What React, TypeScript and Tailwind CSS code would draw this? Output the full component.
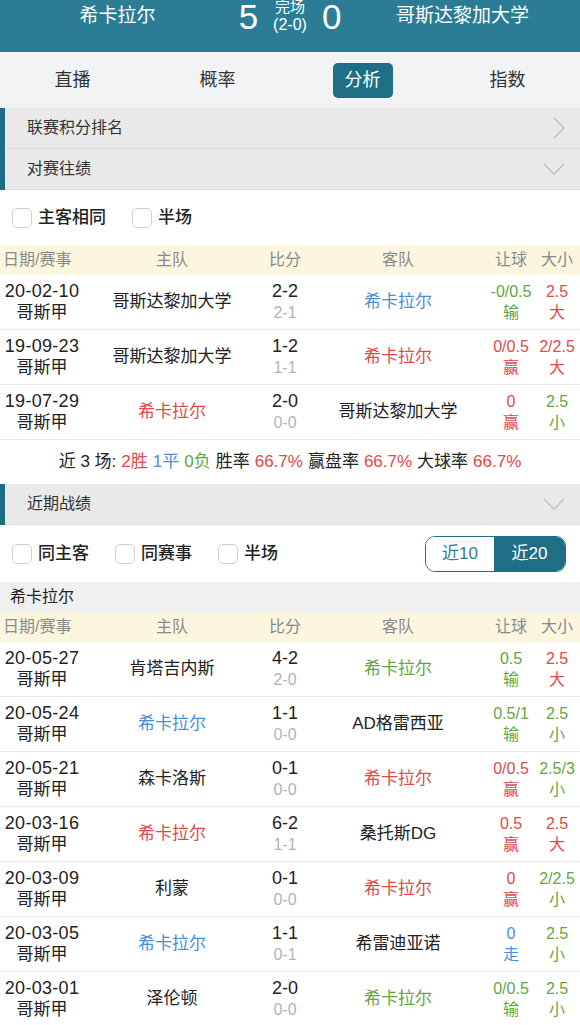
import React from 'react';

type C = 'k' | 'r' | 'b' | 'g';

interface Match {
  date: string;
  home: string;
  homeC: C;
  score: string;
  half: string;
  away: string;
  awayC: C;
  hc: string;
  hcRes: string;
  hcC: C;
  ou: string;
  ouRes: string;
  ouC: C;
}

const color: Record<C, string> = {
  k: 'text-[#222]',
  r: 'text-[#e0494b]',
  b: 'text-[#4a8fd6]',
  g: 'text-[#5fa743]',
};

const h2h: Match[] = [
  { date: '20-02-10', home: '哥斯达黎加大学', homeC: 'k', score: '2-2', half: '2-1', away: '希卡拉尔', awayC: 'b', hc: '-0/0.5', hcRes: '输', hcC: 'g', ou: '2.5', ouRes: '大', ouC: 'r' },
  { date: '19-09-23', home: '哥斯达黎加大学', homeC: 'k', score: '1-2', half: '1-1', away: '希卡拉尔', awayC: 'r', hc: '0/0.5', hcRes: '赢', hcC: 'r', ou: '2/2.5', ouRes: '大', ouC: 'r' },
  { date: '19-07-29', home: '希卡拉尔', homeC: 'r', score: '2-0', half: '0-0', away: '哥斯达黎加大学', awayC: 'k', hc: '0', hcRes: '赢', hcC: 'r', ou: '2.5', ouRes: '小', ouC: 'g' },
];

const recent: Match[] = [
  { date: '20-05-27', home: '肯塔吉内斯', homeC: 'k', score: '4-2', half: '2-0', away: '希卡拉尔', awayC: 'g', hc: '0.5', hcRes: '输', hcC: 'g', ou: '2.5', ouRes: '大', ouC: 'r' },
  { date: '20-05-24', home: '希卡拉尔', homeC: 'b', score: '1-1', half: '0-0', away: 'AD格雷西亚', awayC: 'k', hc: '0.5/1', hcRes: '输', hcC: 'g', ou: '2.5', ouRes: '小', ouC: 'g' },
  { date: '20-05-21', home: '森卡洛斯', homeC: 'k', score: '0-1', half: '0-0', away: '希卡拉尔', awayC: 'r', hc: '0/0.5', hcRes: '赢', hcC: 'r', ou: '2.5/3', ouRes: '小', ouC: 'g' },
  { date: '20-03-16', home: '希卡拉尔', homeC: 'r', score: '6-2', half: '1-1', away: '桑托斯DG', awayC: 'k', hc: '0.5', hcRes: '赢', hcC: 'r', ou: '2.5', ouRes: '大', ouC: 'r' },
  { date: '20-03-09', home: '利蒙', homeC: 'k', score: '0-1', half: '0-0', away: '希卡拉尔', awayC: 'r', hc: '0', hcRes: '赢', hcC: 'r', ou: '2/2.5', ouRes: '小', ouC: 'g' },
  { date: '20-03-05', home: '希卡拉尔', homeC: 'b', score: '1-1', half: '0-1', away: '希雷迪亚诺', awayC: 'k', hc: '0', hcRes: '走', hcC: 'b', ou: '2.5', ouRes: '小', ouC: 'g' },
  { date: '20-03-01', home: '泽伦顿', homeC: 'k', score: '2-0', half: '0-0', away: '希卡拉尔', awayC: 'g', hc: '0/0.5', hcRes: '输', hcC: 'g', ou: '2.5', ouRes: '小', ouC: 'g' },
];

const cols = 'grid grid-cols-[78px_188px_38px_188px_38px_50px]';

function SectionBar({ title, icon }: { title: string; icon: 'right' | 'down' }) {
  return (
    <div className="flex h-[41px] items-center justify-between bg-[#e9e9e9] pl-[22px] pr-[14px] border-b border-[#dcdcdc]">
      <span className="text-[16px] text-[#333]">{title}</span>
      {icon === 'right' ? (
        <svg width="14" height="24" viewBox="0 0 14 24" fill="none" stroke="#c4c4c4" strokeWidth="1.6">
          <path d="M2 2l10 10-10 10" />
        </svg>
      ) : (
        <svg width="24" height="14" viewBox="0 0 24 14" fill="none" stroke="#c4c4c4" strokeWidth="1.6">
          <path d="M2 2l10 10 10-10" />
        </svg>
      )}
    </div>
  );
}

function Check({ label }: { label: string }) {
  return (
    <div className="flex items-center gap-[6px]">
      <span className="h-[20px] w-[20px] rounded-[5px] border border-[#cfcfcf] bg-white" />
      <span className="text-[17px] font-medium text-[#222]">{label}</span>
    </div>
  );
}

function TableHead() {
  return (
    <div className={`${cols} h-[30px] items-center bg-[#fcf6df] text-[16px] text-[#8a8a8a]`}>
      <span className="pl-[3px] whitespace-nowrap">日期/赛事</span>
      <span className="text-center">主队</span>
      <span className="text-center">比分</span>
      <span className="text-center">客队</span>
      <span className="text-center whitespace-nowrap">让球</span>
      <span className="text-center pl-[4px]">大小</span>
    </div>
  );
}

function Row({ m }: { m: Match }) {
  return (
    <div className={`${cols} h-[55px] items-center border-b border-[#ececec] bg-white`}>
      <div className="flex flex-col items-center pl-[6px] leading-[21px] text-[17px] text-[#222] whitespace-nowrap">
        <span className="text-[18px] tracking-[0.3px]">{m.date}</span>
        <span>哥斯甲</span>
      </div>
      <div className={`text-center text-[17px] whitespace-nowrap ${color[m.homeC]}`}>{m.home}</div>
      <div className="flex flex-col items-center leading-[21px]">
        <span className="text-[18px] text-[#222]">{m.score}</span>
        <span className="text-[16px] text-[#b3b3b3]">{m.half}</span>
      </div>
      <div className={`text-center text-[17px] whitespace-nowrap ${color[m.awayC]}`}>{m.away}</div>
      <div className={`flex flex-col items-center leading-[21px] text-[16px] whitespace-nowrap ${color[m.hcC]}`}>
        <span>{m.hc}</span>
        <span>{m.hcRes}</span>
      </div>
      <div className={`flex flex-col items-center pl-[4px] leading-[21px] text-[16px] whitespace-nowrap ${color[m.ouC]}`}>
        <span>{m.ou}</span>
        <span>{m.ouRes}</span>
      </div>
    </div>
  );
}

export default function App() {
  return (
    <div className="w-[580px] h-[1025px] overflow-hidden bg-white font-['Liberation_Sans','Noto_Sans_CJK_SC',sans-serif]">
      {/* match header */}
      <div className="flex h-[52px] items-start overflow-hidden bg-[#2b7d95] pt-[3px] text-white">
        <div className="w-[235px] text-center text-[19px] leading-[26px]">希卡拉尔</div>
        <div className="flex w-[110px] items-start justify-center gap-[15px] -mt-[8px]">
          <span className="text-[35px] leading-[44px]">5</span>
          <div className="flex flex-col items-center mt-[3px]">
            <span className="text-[15px] leading-[18px]">完场</span>
            <span className="text-[16px] leading-[18px]">(2-0)</span>
          </div>
          <span className="text-[35px] leading-[44px]">0</span>
        </div>
        <div className="w-[235px] text-center text-[19px] leading-[26px]">哥斯达黎加大学</div>
      </div>

      {/* tabs */}
      <div className="grid h-[56px] grid-cols-4 items-center bg-[#f1f3f4] text-[18px] text-[#333]">
        <div className="text-center">直播</div>
        <div className="text-center">概率</div>
        <div className="flex justify-center">
          <span className="rounded-[5px] bg-[#1e6f86] px-[12px] py-[4px] text-white">分析</span>
        </div>
        <div className="text-center">指数</div>
      </div>

      {/* head to head */}
      <div className="border-l-[5px] border-[#1e6f86]">
        <SectionBar title="联赛积分排名" icon="right" />
        <SectionBar title="对赛往绩" icon="down" />
      </div>
      <div className="flex h-[55px] items-center gap-[26px] pl-[12px]">
        <Check label="主客相同" />
        <Check label="半场" />
      </div>
      <TableHead />
      {h2h.map((m) => (
        <Row key={m.date} m={m} />
      ))}
      <div className="flex h-[44px] items-center justify-center gap-[5px] text-[17px] text-[#222] whitespace-nowrap">
        <span>近 3 场:</span>
        <span className="text-[#e0494b]">2胜</span>
        <span className="text-[#4a8fd6]">1平</span>
        <span className="text-[#5fa743]">0负</span>
        <span>胜率</span>
        <span className="text-[#e0494b]">66.7%</span>
        <span>赢盘率</span>
        <span className="text-[#e0494b]">66.7%</span>
        <span>大球率</span>
        <span className="text-[#e0494b]">66.7%</span>
      </div>

      {/* recent form */}
      <div className="border-l-[5px] border-[#1e6f86]">
        <SectionBar title="近期战绩" icon="down" />
      </div>
      <div className="flex h-[57px] items-center justify-between pl-[12px] pr-[14px]">
        <div className="flex items-center gap-[26px]">
          <Check label="同主客" />
          <Check label="同赛事" />
          <Check label="半场" />
        </div>
        <div className="flex h-[36px] overflow-hidden rounded-[10px] border border-[#1e6f86] text-[17px]">
          <span className="flex w-[68px] items-center justify-center bg-white text-[#2b7d95]">近10</span>
          <span className="flex w-[71px] items-center justify-center bg-[#1e6f86] text-white">近20</span>
        </div>
      </div>
      <div className="flex h-[30px] items-center bg-[#f0f0f0] pl-[10px] text-[16px] text-[#222]">希卡拉尔</div>
      <TableHead />
      {recent.map((m) => (
        <Row key={m.date} m={m} />
      ))}
    </div>
  );
}
